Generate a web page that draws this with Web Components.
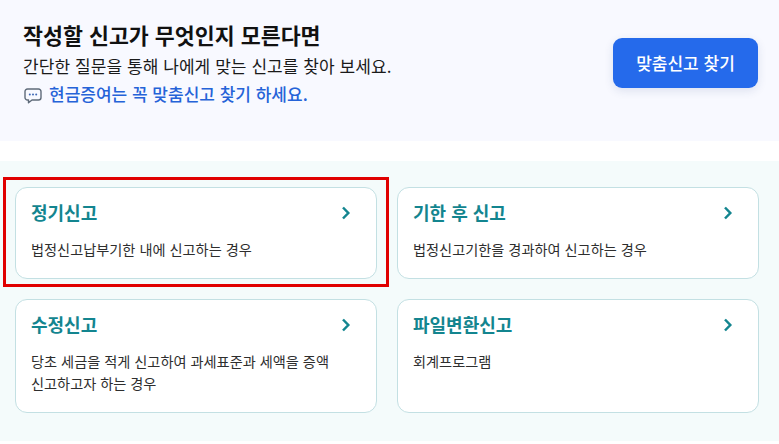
<!DOCTYPE html>
<html lang="ko"><head><meta charset="utf-8"><style>
html,body{margin:0;padding:0;background:#fff}
body{width:779px;height:444px;overflow:hidden;font-family:"Noto Sans CJK KR","Noto Sans",sans-serif}
</style></head><body>
<guide-banner>
<span slot="title">작성할 신고가 무엇인지 모른다면</span>
<span slot="desc">간단한 질문을 통해 나에게 맞는 신고를 찾아 보세요.</span>
<span slot="note">현금증여는 꼭 맞춤신고 찾기 하세요.</span>
<span slot="action">맞춤신고 찾기</span>
</guide-banner>
<report-grid>
<report-card marked><span slot="title">정기신고</span>법정신고납부기한 내에 신고하는 경우</report-card>
<report-card><span slot="title">기한 후 신고</span>법정신고기한을 경과하여 신고하는 경우</report-card>
<report-card><span slot="title">수정신고</span>당초 세금을 적게 신고하여 과세표준과 세액을 증액<br>신고하고자 하는 경우</report-card>
<report-card><span slot="title">파일변환신고</span>회계프로그램</report-card>
</report-grid>
<script>
function def(name,html){customElements.define(name,class extends HTMLElement{constructor(){super();this.attachShadow({mode:"open"}).innerHTML=html}})}
def("guide-banner",`<style>
:host{display:flex;box-sizing:border-box;height:141px;background:#f8f9ff;padding:20px 21px 0 23px;justify-content:space-between;align-items:flex-start;color:#111}
.t{font-size:21.7px;font-weight:700;line-height:30px}
.d{font-size:17px;line-height:24px;margin-top:4px;color:#1a1a1a;letter-spacing:.07px}
.n{display:flex;align-items:center;gap:7px;font-size:17px;font-weight:500;line-height:24px;margin-top:4px;color:#2563d8}
.n svg{display:block;flex:none;margin:3px 0 0 1px}
button{all:unset;box-sizing:border-box;width:145px;height:50px;margin-top:18px;border-radius:9px;background:#256aeb;color:#fff;font:500 17px/50px "Noto Sans CJK KR",sans-serif;text-align:center;box-shadow:0 3px 10px rgba(30,60,120,.12)}
</style><div><div class="t"><slot name="title"></slot></div><div class="d"><slot name="desc"></slot></div>
<div class="n"><svg width="18" height="16" viewBox="0 0 18 16" fill="none"><path d="M3.500 1h11a2.500 2.500 0 0 1 2.500 2.500v6a2.500 2.500 0 0 1-2.500 2.500H8l-3.500 2.800V12h-1A2.500 2.500 0 0 1 1 9.500v-6A2.500 2.500 0 0 1 3.500 1z" stroke="#5f6b7a" stroke-width="1.400" stroke-linejoin="round"/><circle cx="5.800" cy="6.500" r="1" fill="#3f68b5"/><circle cx="9" cy="6.500" r="1" fill="#3f68b5"/><circle cx="12.200" cy="6.500" r="1" fill="#3f68b5"/></svg><slot name="note"></slot></div></div>
<button><slot name="action"></slot></button>`);
def("report-grid",`<style>
:host{display:grid;box-sizing:border-box;margin-top:20px;height:280px;background:#f4fbfb;padding:26px 20px 0 15px;grid-template-columns:362px 362px;column-gap:20px;row-gap:20px;grid-template-rows:92px 114px;align-content:start}
</style><slot></slot>`);
customElements.define("report-card",class extends HTMLElement{constructor(){super();this.attachShadow({mode:"open"}).innerHTML=`<style>
:host{display:block;position:relative;box-sizing:border-box;background:#fff;border:1px solid #c3e0e3;border-radius:12px;padding:10px 10px 0 15px}
.h{display:flex;justify-content:space-between;align-items:center;height:28px}
.t{font-size:18px;font-weight:700;color:#13858f;line-height:28px}
.b{margin-top:12px;font-size:14.200px;line-height:22px;color:#2e2e2e}
svg{display:block;margin:1px 14px 0 0}
.mark{display:none;position:absolute;left:-13px;top:-11px;width:386px;height:110px;box-sizing:border-box;border:3px solid #e00000;pointer-events:none}
:host([marked]) .mark{display:block}
</style><div class="h"><span class="t"><slot name="title"></slot></span><svg width="12" height="16" viewBox="0 0 12 16" fill="none"><path d="M3 2.500L8.300 8 3 13.500" stroke="#13858f" stroke-width="2.500"/></svg></div><div class="b"><slot></slot></div><div class="mark"></div>`}});
</script>
</body></html>
